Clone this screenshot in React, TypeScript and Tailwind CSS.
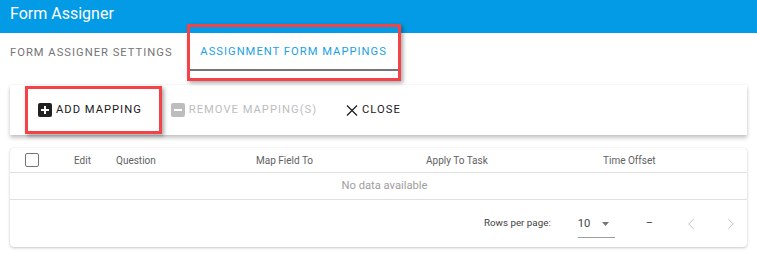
import { ChevronLeft, ChevronRight } from "lucide-react";

const font = { fontFamily: "Roboto, 'Liberation Sans', sans-serif" };

function PlusBox({ disabled }: { disabled?: boolean }) {
    return (
        <svg width="14" height="14" viewBox="0 0 14 14" className="shrink-0">
            <rect width="14" height="14" rx="2" fill={disabled ? "#bdbdbd" : "#212121"} />
            {disabled ? (
                <rect x="3" y="6" width="8" height="2" fill="#fff" />
            ) : (
                <path d="M3 6h3V3h2v3h3v2H8v3H6V8H3z" fill="#fff" />
            )}
        </svg>
    );
}

function CloseIcon() {
    return (
        <svg width="12" height="11" viewBox="0 0 12 11" className="shrink-0">
            <path d="M1 0.5 11 10.5M11 0.5 1 10.5" stroke="#212121" strokeWidth="1.3" fill="none" />
        </svg>
    );
}

function ToolbarButton({
    icon,
    label,
    disabled,
}: {
    icon: React.ReactNode;
    label: string;
    disabled?: boolean;
}) {
    return (
        <button
            className={`flex items-center gap-[4px] whitespace-nowrap pt-[1px] text-[11.2px] uppercase tracking-[0.09em] ${
                disabled ? "text-[#bdbdbd]" : "text-[#212121]"
            }`}
        >
            {icon}
            <span>{label}</span>
        </button>
    );
}

const columns = [
    { label: "Edit", width: "w-[42px]" },
    { label: "Question", width: "w-[140px]" },
    { label: "Map Field To", width: "w-[170px]" },
    { label: "Apply To Task", width: "w-[177px]" },
    { label: "Time Offset", width: "flex-1" },
];

export default function App() {
    return (
        <div className="relative h-[254px] w-[757px] overflow-hidden bg-white" style={font}>
            <header className="flex h-[33px] items-center bg-[#039be5] px-[10px] pb-[5px] text-[16px] text-white">
                Form Assigner
            </header>

            <nav className="flex h-[38px] items-stretch whitespace-nowrap text-[11.2px] uppercase tracking-[0.09em]">
                <div className="flex items-center pl-[10px] pt-[2px] text-[#757575]">Form Assigner Settings</div>
                <div className="ml-[17px] flex w-[208px] items-center justify-center border-b-2 border-[#757575] pt-[2px] text-[#1e9fe3]">
                    Assignment Form Mappings
                </div>
            </nav>

            <div className="mx-[10px] mt-[14px] flex h-[50px] items-center gap-[29px] bg-white pl-[28px] shadow-[0_3px_4px_rgba(0,0,0,0.22),0_0_2px_rgba(0,0,0,0.08)]">
                <ToolbarButton icon={<PlusBox />} label="Add Mapping" />
                <ToolbarButton icon={<PlusBox disabled />} label="Remove Mapping(s)" disabled />
                <ToolbarButton icon={<CloseIcon />} label="Close" />
            </div>

            <div className="mx-[10px] mt-[13px] rounded-[4px] bg-white shadow-[0_1px_3px_rgba(0,0,0,0.22),0_0_1px_rgba(0,0,0,0.1)]">
                <div className="flex h-[25px] items-center border-b border-[#e0e0e0] pl-[15px] text-[10px] text-[#616161]">
                    <div className="w-[49px]">
                        <div className="h-[14px] w-[14px] rounded-[2px] border-[1.5px] border-[#757575]" />
                    </div>
                    {columns.map((col) => (
                        <div key={col.label} className={col.width}>
                            {col.label}
                        </div>
                    ))}
                </div>
                <div className="flex h-[27px] items-center justify-center border-b border-[#e0e0e0] pl-[12px] text-[11.2px] text-[#9e9e9e]">
                    No data available
                </div>
                <div className="flex h-[47px] items-center justify-end pr-[7px] text-[9.8px] text-[#424242]">
                    <span>Rows per page:</span>
                    <div className="ml-[27px] flex h-[28px] w-[37px] items-center border-b border-[#9e9e9e] pt-[2px]">
                        <span className="text-[11.2px]">10</span>
                        <svg width="7" height="4" viewBox="0 0 7 4" className="ml-[12px]">
                            <path d="M0 0h7L3.5 4z" fill="#757575" />
                        </svg>
                    </div>
                    <span className="ml-[31px] text-[11px]">–</span>
                    <ChevronLeft size={18} strokeWidth={1.3} className="ml-[29px] text-[#bdbdbd]" />
                    <ChevronRight size={18} strokeWidth={1.3} className="ml-[22px] text-[#bdbdbd]" />
                </div>
            </div>

            <div className="pointer-events-none absolute left-[187px] top-[24px] h-[57px] w-[214px] border-[3px] border-[#f44347] shadow-[2px_2px_4px_rgba(0,0,0,0.35)]" />
            <div className="pointer-events-none absolute left-[25px] top-[86px] h-[48px] w-[137px] border-[3px] border-[#f44347] shadow-[2px_2px_4px_rgba(0,0,0,0.35)]" />
        </div>
    );
}
